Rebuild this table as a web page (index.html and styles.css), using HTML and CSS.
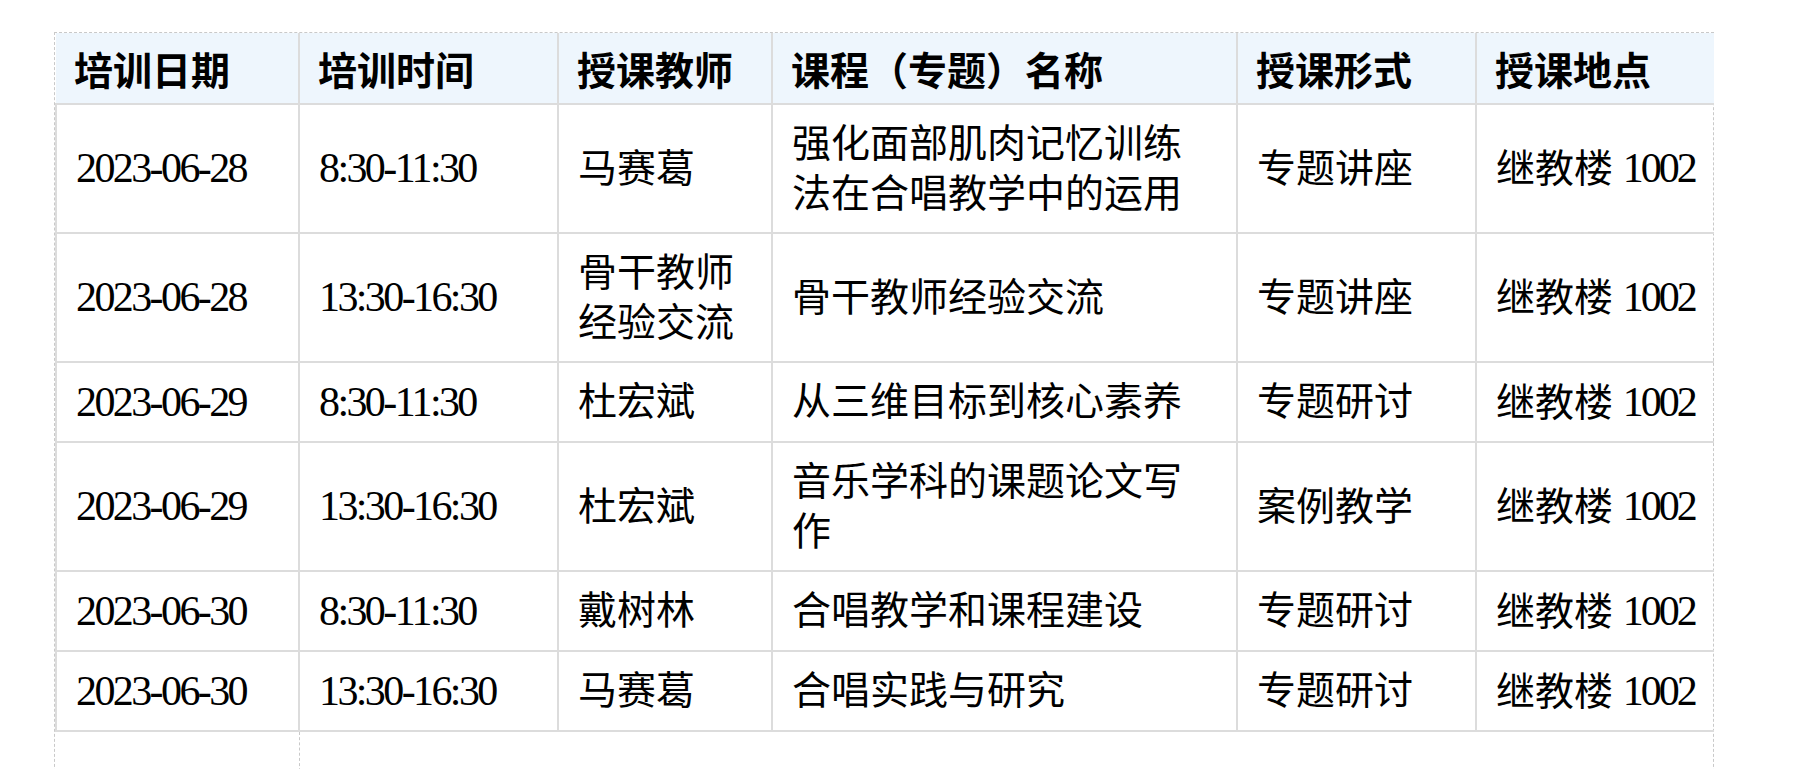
FILE: index.html
```html
<!DOCTYPE html>
<html lang="zh-CN">
<head>
<meta charset="utf-8">
<title>培训安排</title>
<link rel="stylesheet" href="styles.css">
</head>
<body>
<div class="frame">
  <table class="schedule">
    <colgroup>
      <col class="c-date">
      <col class="c-time">
      <col class="c-teacher">
      <col class="c-course">
      <col class="c-form">
      <col class="c-place">
    </colgroup>
    <thead>
      <tr>
        <th>培训日期</th>
        <th>培训时间</th>
        <th>授课教师</th>
        <th>课程（专题）名称</th>
        <th>授课形式</th>
        <th>授课地点</th>
      </tr>
    </thead>
    <tbody>
      <tr>
        <td><span class="num">2023-06-28</span></td>
        <td><span class="num">8:30-11:30</span></td>
        <td>马赛葛</td>
        <td>强化面部肌肉记忆训练法在合唱教学中的运用</td>
        <td>专题讲座</td>
        <td class="place">继教楼 <span class="num">1002</span></td>
      </tr>
      <tr>
        <td><span class="num">2023-06-28</span></td>
        <td><span class="num">13:30-16:30</span></td>
        <td>骨干教师经验交流</td>
        <td>骨干教师经验交流</td>
        <td>专题讲座</td>
        <td class="place">继教楼 <span class="num">1002</span></td>
      </tr>
      <tr>
        <td><span class="num">2023-06-29</span></td>
        <td><span class="num">8:30-11:30</span></td>
        <td>杜宏斌</td>
        <td>从三维目标到核心素养</td>
        <td>专题研讨</td>
        <td class="place">继教楼 <span class="num">1002</span></td>
      </tr>
      <tr>
        <td><span class="num">2023-06-29</span></td>
        <td><span class="num">13:30-16:30</span></td>
        <td>杜宏斌</td>
        <td>音乐学科的课题论文写作</td>
        <td>案例教学</td>
        <td class="place">继教楼 <span class="num">1002</span></td>
      </tr>
      <tr>
        <td><span class="num">2023-06-30</span></td>
        <td><span class="num">8:30-11:30</span></td>
        <td>戴树林</td>
        <td>合唱教学和课程建设</td>
        <td>专题研讨</td>
        <td class="place">继教楼 <span class="num">1002</span></td>
      </tr>
      <tr>
        <td><span class="num">2023-06-30</span></td>
        <td><span class="num">13:30-16:30</span></td>
        <td>马赛葛</td>
        <td>合唱实践与研究</td>
        <td>专题研讨</td>
        <td class="place">继教楼 <span class="num">1002</span></td>
      </tr>
      <tr class="blank">
        <td></td>
        <td colspan="5"></td>
      </tr>
    </tbody>
  </table>
</div>
</body>
</html>
```
FILE: styles.css
```css
html, body {
  margin: 0;
  padding: 0;
  background: #ffffff;
}

body {
  padding: 32px 0 0 54px;
  font-family: "Liberation Serif", "Noto Sans CJK SC", serif;
  color: #000000;
}

.frame {
  width: 1658px;
  border: 1px dashed #c9c9c9;
  border-bottom: none;
}

.schedule {
  width: 100%;
  table-layout: fixed;
  border-collapse: collapse;
  font-size: 39px;
  line-height: 50px;
}

.c-date { width: 243px; }
.c-time { width: 259px; }
.c-teacher { width: 214px; }
.c-course { width: 465px; }
.c-form { width: 239px; }
.c-place { width: 238px; }

.schedule th {
  background: #eef6fd;
  font-family: "Noto Sans CJK SC", sans-serif;
  font-weight: 700;
  text-align: left;
  padding: 10px 18px;
  border: 2px solid #dcdcdc;
  border-top: none;
  color: #000000;
}

.schedule th:first-child {
  border-left: none;
}

.schedule th:last-child {
  border-right: none;
}

.schedule td {
  padding: 13.5px 18px 13.5px 19px;
  border: 2px solid #dcdcdc;
  vertical-align: middle;
  text-align: left;
  word-break: break-all;
}

.schedule td:last-child {
  border-right: none;
}

.schedule td.place {
  white-space: nowrap;
  word-break: normal;
}

.num {
  font-size: 42px;
  letter-spacing: -2.6px;
  font-family: "Liberation Serif", serif;
}

.place .num {
  letter-spacing: -3px;
}

.schedule .blank td {
  height: 60px;
  padding: 0;
  border: none;
  border-left: 1px dashed #c9c9c9;
}

.schedule .blank td:first-child {
  border-left: none;
}
```
